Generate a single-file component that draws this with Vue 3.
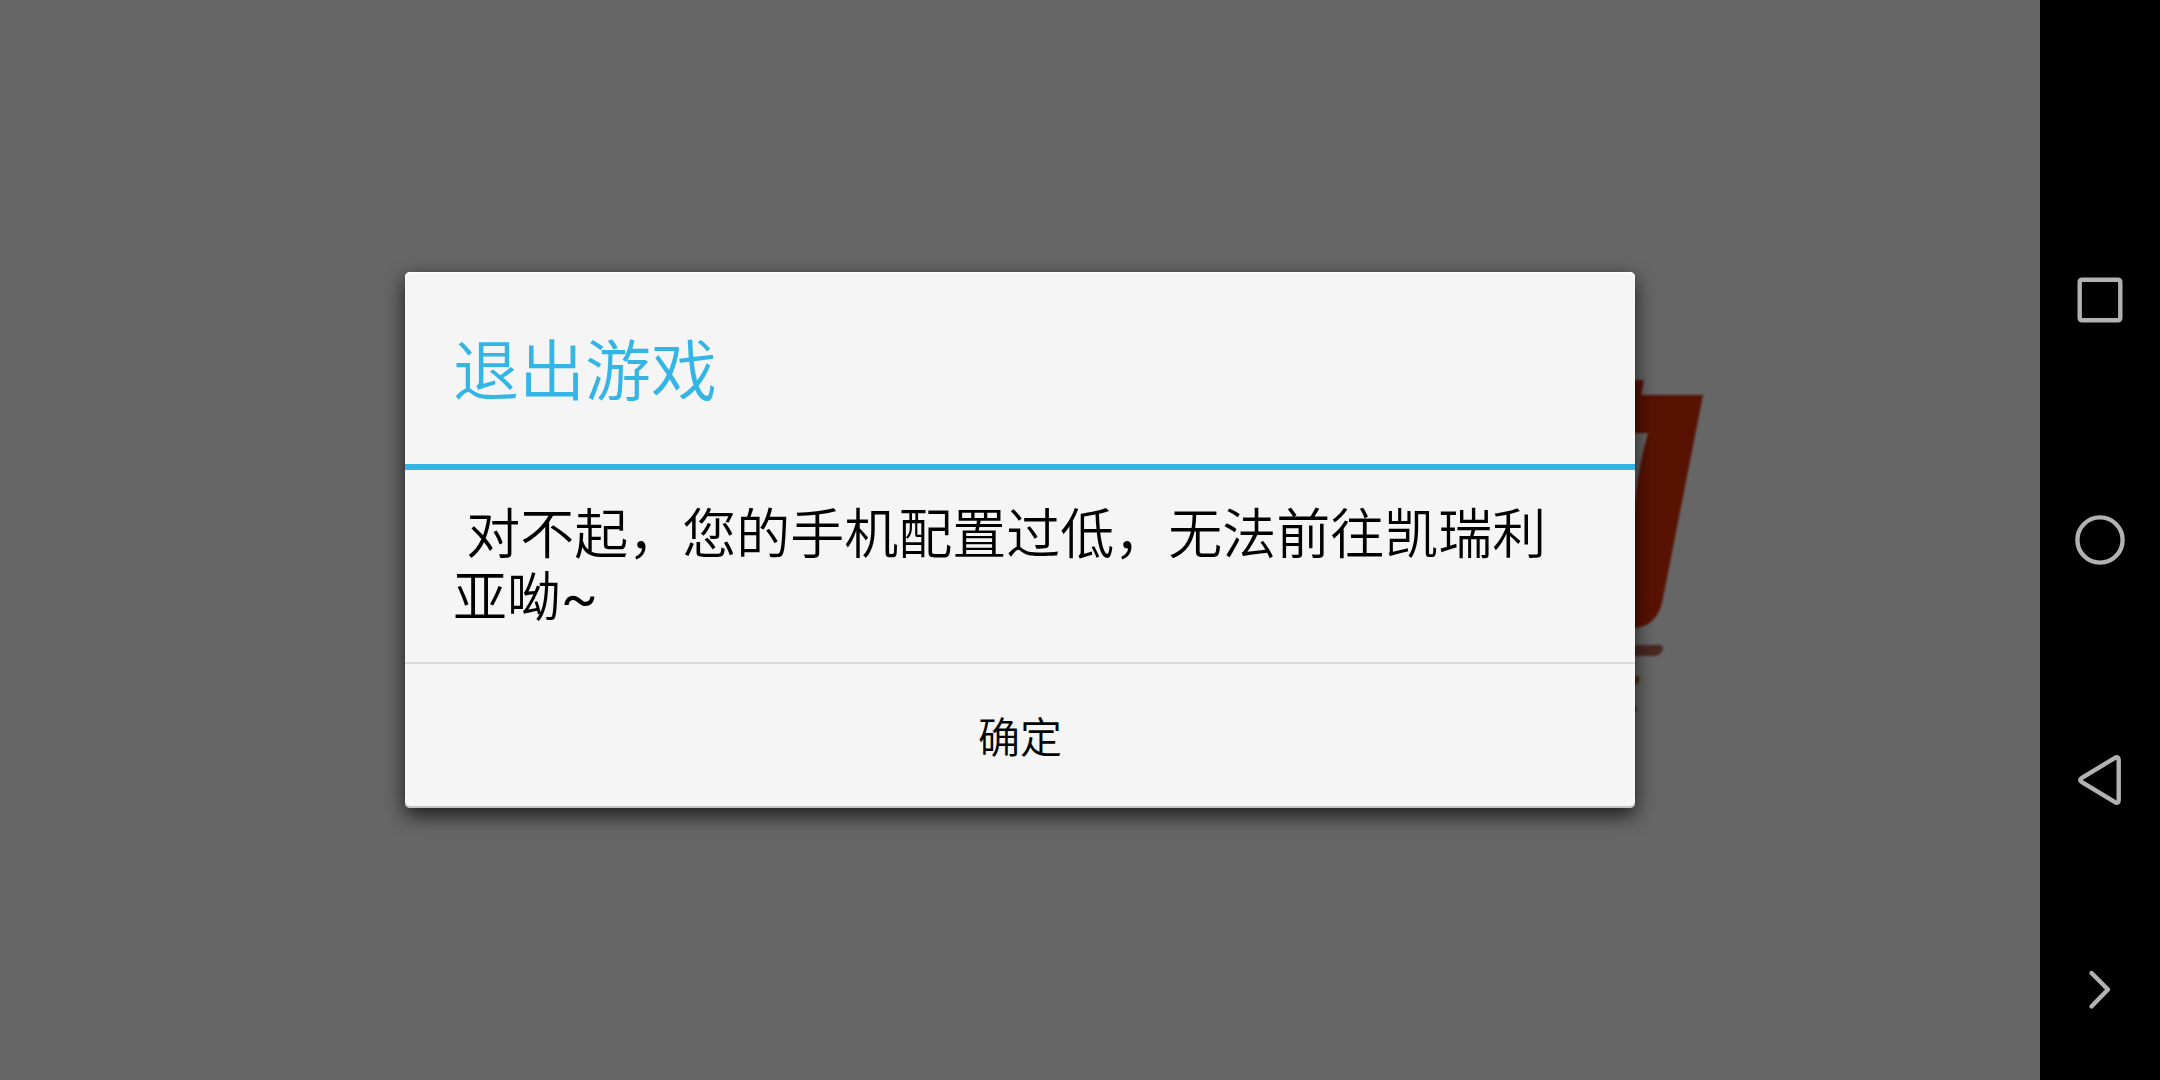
<script setup>
import { ref } from 'vue'

const title = '退出游戏'
const message = ' 对不起，您的手机配置过低，无法前往凯瑞利亚呦'
const open = ref(true)
</script>

<template>
  <div class="screen">
    <main class="stage">
      <svg class="logo" width="1366" height="350" viewBox="0 0 1366 350" aria-hidden="true">
        <path
          fill="#581202"
          fill-rule="evenodd"
          d="M1270 15H1307L1304 30H1366L1325 238C1321 254 1310 263 1296 263H1270ZM1270 68H1311Q1302 99 1298 135L1290 190H1270Z"
        />
        <path fill="#4b2822" d="M1270 280H1322Q1326 280 1326 284Q1324 291 1317 291H1270Z" />
        <path fill="#4b2822" d="M1280 311H1301Q1304 314 1301 318L1296 322H1280Z" />
        <circle fill="#4b2822" cx="1297" cy="344" r="3" />
      </svg>

      <section v-if="open" class="dialog" role="alertdialog" aria-labelledby="dialog-title" aria-describedby="dialog-message">
        <h1 id="dialog-title" class="title">{{ title }}</h1>
        <p id="dialog-message" class="message">{{ message }}<span class="latin">~</span></p>
        <button class="confirm" type="button" @click="open = false">确定</button>
      </section>
    </main>

    <nav class="navbar" aria-label="系统导航">
      <button class="nav-button" type="button" aria-label="最近任务">
        <svg width="60" height="60" viewBox="0 0 60 60"><rect x="9.7" y="9.7" width="40.6" height="40.6" rx="2" /></svg>
      </button>
      <button class="nav-button" type="button" aria-label="主屏幕">
        <svg width="60" height="60" viewBox="0 0 60 60"><circle cx="30" cy="30" r="22.6" /></svg>
      </button>
      <button class="nav-button" type="button" aria-label="返回">
        <svg width="60" height="60" viewBox="0 0 60 60"><path d="M11.5 28.2L45 7.8Q48.7 6 48.7 9.8V50.2Q48.7 54 45 52.2L11.5 31.8Q9 30 11.5 28.2Z" /></svg>
      </button>
      <button class="nav-button small" type="button" aria-label="收起">
        <svg width="60" height="60" viewBox="0 0 60 60"><path d="M21.5 13L38 29.5L21.5 46.5" /></svg>
      </button>
    </nav>
  </div>
</template>

<style>
body {
  margin: 0;
  background: #000;
}
</style>

<style scoped>
.screen {
  display: flex;
  min-height: 100vh;
  font-family: Roboto, "Noto Sans CJK SC", sans-serif;
  font-weight: 350;
}

.stage {
  flex: 1;
  min-width: 0;
  display: grid;
  place-items: center;
  overflow: hidden;
  background: #666;
}

.logo,
.dialog {
  grid-area: 1 / 1;
}

.logo {
  filter: blur(1px);
}

.dialog {
  box-sizing: border-box;
  width: 100%;
  max-width: 1230px;
  overflow: hidden;
  z-index: 1;
  border-radius: 5px;
  background: #f5f5f5;
  box-shadow: 0 7px 20px rgba(0, 0, 0, 0.75), inset 0 -2px #c4c4c4, inset 0 2px #fff;
}

.title {
  margin: 0;
  padding: 10px 48px 0;
  border-bottom: 6px solid #33b5e5;
  color: #33b5e5;
  font-size: 66px;
  font-weight: inherit;
  line-height: 182px;
}

.message {
  margin: 0;
  padding: 34px 48px 32px;
  border-bottom: 2px solid #dadada;
  color: #000;
  font-size: 54px;
  line-height: 63px;
  white-space: pre-wrap;
}

.latin {
  font-weight: 400;
}

.confirm {
  display: block;
  width: 100%;
  height: 144px;
  padding: 6px 0 0;
  border: 0;
  background: none;
  color: #000;
  font: inherit;
  font-size: 42px;
  line-height: 48px;
}

.navbar {
  display: flex;
  flex-direction: column;
  width: 120px;
  background: #000;
}

.navbar::before {
  content: "";
  flex: 3;
}

.nav-button {
  flex: 4;
  display: flex;
  align-items: center;
  justify-content: center;
  padding: 0;
  border: 0;
  background: none;
}

.nav-button.small {
  flex: 3;
}

.nav-button svg {
  fill: none;
  stroke: #b2b2b2;
  stroke-width: 4.4;
  stroke-linecap: round;
  stroke-linejoin: round;
}
</style>
